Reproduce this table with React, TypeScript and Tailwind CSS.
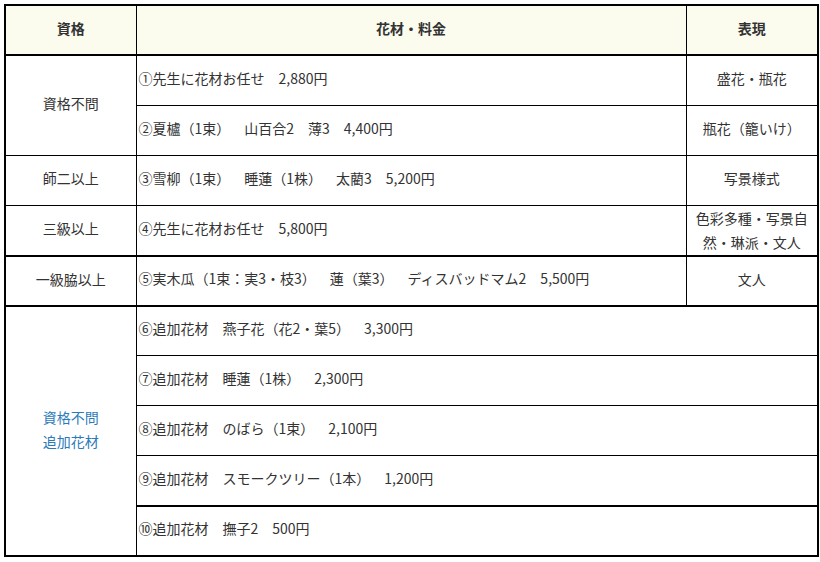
import React from 'react';

const font = { fontFamily: '"Meiryo", "Noto Sans CJK JP", "Noto Sans", sans-serif' };

type Row = {
  qual?: React.ReactNode;
  qualSpan?: number;
  qualBlue?: boolean;
  item: string;
  expr?: React.ReactNode;
  wrap?: boolean;
  thick?: boolean;
};

const rows: Row[] = [
  { qual: '資格不問', qualSpan: 2, item: '①先生に花材お任せ　2,880円', expr: '盛花・瓶花' },
  { item: '②夏櫨（1束）　山百合2　薄3　4,400円', expr: '瓶花（籠いけ）' },
  { qual: '師二以上', item: '③雪柳（1束）　睡蓮（1株）　太藺3　5,200円', expr: '写景様式' },
  { qual: '三級以上', item: '④先生に花材お任せ　5,800円', expr: '色彩多種・写景自然・琳派・文人', wrap: true, thick: true },
  { qual: '一級脇以上', item: '⑤実木瓜（1束：実3・枝3）　蓮（葉3）　ディスバッドマム2　5,500円', expr: '文人', thick: true },
  {
    qual: (
      <>
        資格不問
        <br />
        追加花材
      </>
    ),
    qualSpan: 5,
    qualBlue: true,
    item: '⑥追加花材　燕子花（花2・葉5）　3,300円',
  },
  { item: '⑦追加花材　睡蓮（1株）　2,300円' },
  { item: '⑧追加花材　のばら（1束）　2,100円' },
  { item: '⑨追加花材　スモークツリー（1本）　1,200円', thick: true },
  { item: '⑩追加花材　撫子2　500円' },
];

const App = () => {
  return (
    <div className="bg-white min-h-screen pt-[4px] pl-[4px]" style={font}>
      <table className="border-collapse border-2 border-black text-[14px] text-[#333] w-[813px] table-fixed [text-spacing-trim:space-all]">
        <colgroup>
          <col className="w-[131px]" />
          <col className="w-[550px]" />
          <col className="w-[132px]" />
        </colgroup>
        <thead>
          <tr className="h-[50px] bg-[#fbfbee]">
            <th className="border border-black border-b-2 font-bold text-center pb-[4px]">資格</th>
            <th className="border border-black border-b-2 font-bold text-center pb-[4px]">花材・料金</th>
            <th className="border border-black border-b-2 font-bold text-center pb-[4px]">表現</th>
          </tr>
        </thead>
        <tbody>
          {rows.map((r, i) => (
            <tr key={i} className="h-[50px]">
              {r.qual && (
                <td
                  rowSpan={r.qualSpan}
                  className={
                    'border border-black text-center leading-[24px] pb-[4px] ' +
                    (r.qualBlue ? 'text-[#2b7bb9] ' : '') +
                    (r.thick ? 'border-b-2' : '')
                  }
                >
                  {r.qual}
                </td>
              )}
              <td
                colSpan={r.expr ? 1 : 2}
                className={'border border-black pl-[2px] pb-[4px] whitespace-nowrap ' + (r.thick ? 'border-b-2' : '')}
              >
                {r.item}
              </td>
              {r.expr && (
                <td
                  className={
                    'border border-black text-center px-[6px] leading-[24px] ' +
                    (r.wrap ? 'pt-0 pb-[1px] ' : 'pb-[4px] ') +
                    (r.thick ? 'border-b-2' : '')
                  }
                >
                  {r.expr}
                </td>
              )}
            </tr>
          ))}
        </tbody>
      </table>
    </div>
  );
};

export default App;
